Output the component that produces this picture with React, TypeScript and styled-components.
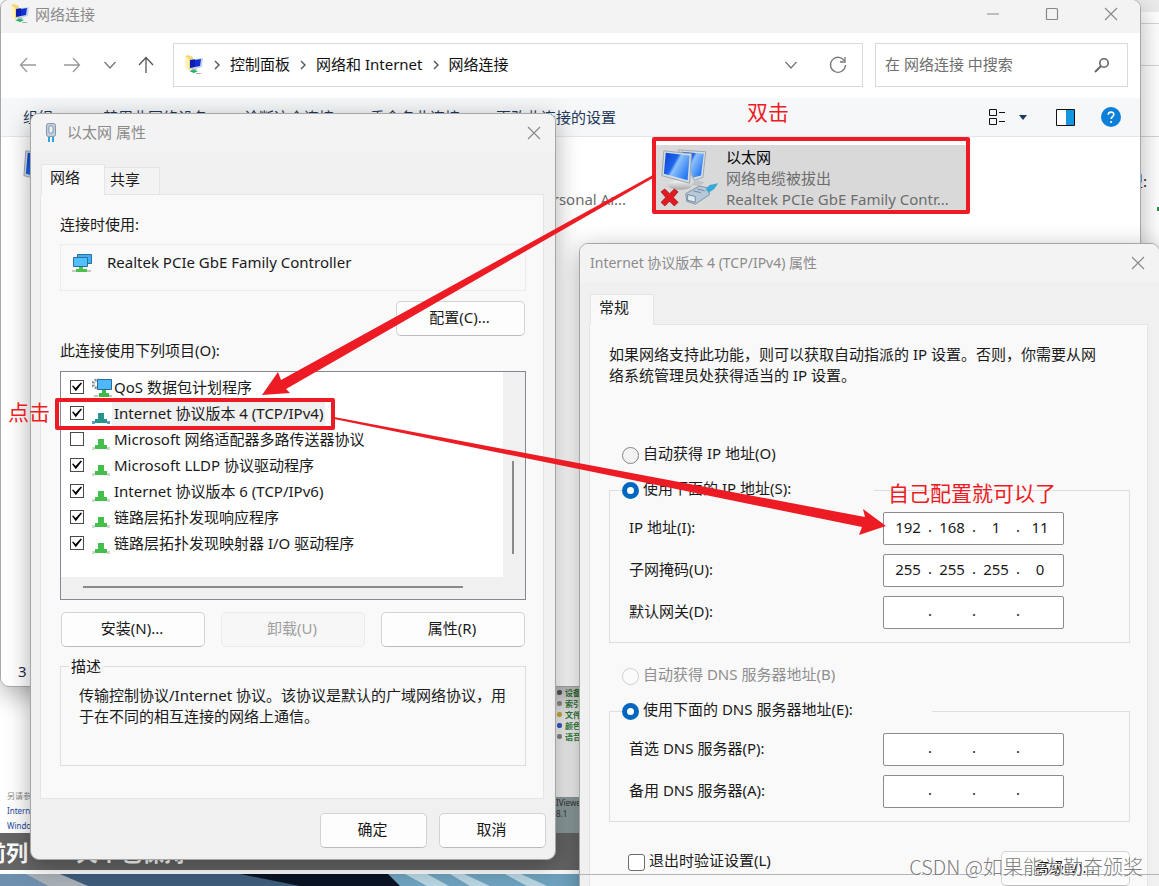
import React from "react";
import styled, { createGlobalStyle, css } from "styled-components";

const RED = "#ed1c24";

const Global = createGlobalStyle`
  * { box-sizing: border-box; }
  body {
    margin: 0;
    font-family: "Noto Sans", "Noto Sans CJK SC", sans-serif;
    font-size: 15px;
    line-height: 21px;
    color: #1a1a1a;
  }
  button, input { font: inherit; color: inherit; }
  p { margin: 0; }
`;

/* ---------- desktop behind the windows ---------- */

const Desktop = styled.main`
  position: relative;
  height: 100vh;
  overflow: hidden;
  display: flex;
  flex-direction: column;
  background: #fff;
`;

const BackPage = styled.div`
  position: relative;
  flex: none;
  height: 833px;
  background: #fff;
`;

const BackToolbar = styled.div`
  position: absolute;
  top: 0;
  right: 0;
  width: 31px;
  display: grid;
  grid-template-rows: 12px 12px 42px 71px 60px;
  white-space: nowrap;
  & > span { border-bottom: 1px solid #d4d4d4; }
  & > span:first-child { background: #ececec; border: 0; }
`;

const BackLabel = styled.p`
  padding: 34px 0 0;
  color: #222;
`;

const GreenMark = styled.i`
  position: absolute;
  right: 0;
  top: 207px;
  width: 2px;
  height: 4px;
  background: #2a8a4a;
`;

const SeeAlso = styled.div`
  position: absolute;
  left: 7px;
  bottom: 0;
  display: flex;
  flex-direction: column;
  font-size: 8px;
  line-height: 15px;
  color: #888;
`;

const BackLink = styled.a`
  color: #1c4a9c;
  text-decoration: none;
`;

const SideShot = styled.div`
  position: absolute;
  left: 540px;
  top: 686px;
  width: 60px;
  bottom: 0;
  display: flex;
  flex-direction: column;
  border-top: 1px solid #777;
  background: #f2f2f2;
  color: #2f7d3b;
  font-size: 8px;
  line-height: 11px;
`;

const SideRow = styled.div`
  display: flex;
  gap: 3px;
  padding-left: 17px;
  font-weight: 700;
  white-space: nowrap;
`;

const SideDot = styled.i<{ $c: string }>`
  width: 5px;
  height: 5px;
  margin-top: 3px;
  border-radius: 2px;
  background: ${(p) => p.$c};
`;

const SideFooter = styled.div`
  margin-top: auto;
  height: 36px;
  padding-left: 16px;
  background: #8d9c9e;
  color: #333;
`;

const Caption = styled.div`
  flex: none;
  height: 37px;
  display: flex;
  align-items: center;
  gap: 48px;
  background: #666;
  color: #fff;
  font-size: 22px;
  font-weight: 700;
  line-height: 36px;
  margin-bottom: 4px;
  white-space: nowrap;
  & > span:first-child { margin-left: -16px; }
`;

const Wallpaper = styled.svg`
  flex: 1;
  width: 100%;
  min-height: 0;
  background: #0a1424;
`;

/* ---------- shared window parts ---------- */

const Explorer = styled.section`
  position: absolute;
  left: 0;
  right: 18px;
  top: -1px;
  height: 688px;
  display: flex;
  flex-direction: column;
  overflow: hidden;
  border: 1px solid #a8a8a8;
  border-radius: 9px;
  background: #fff;
`;

const ExplorerShadow = styled.div`
  position: absolute;
  left: 0;
  right: 18px;
  top: -1px;
  height: 688px;
  border-radius: 9px;
  box-shadow: 0 8px 26px rgba(0, 0, 0, 0.3);
`;

const Dialog = styled.section<{ $left: number; $top: number; $width?: number }>`
  position: absolute;
  left: ${(p) => p.$left}px;
  top: ${(p) => p.$top}px;
  ${(p) => (p.$width ? `width: ${p.$width}px;` : "right: -1px;")}
  border: 1px solid #a6a6a6;
  border-radius: 9px;
  background: #f0f0f0;
  box-shadow: 0 6px 24px rgba(0, 0, 0, 0.32);
`;

const TitleBar = styled.header<{ $h: number; $pad: number; $lift?: number }>`
  flex: none;
  display: flex;
  align-items: center;
  height: ${(p) => p.$h}px;
  padding: 0 0 ${(p) => p.$lift ?? 0}px ${(p) => p.$pad}px;
  border-radius: 8px 8px 0 0;
  background: #f3f3f3;
  color: #8b8b8b;
`;

const Title = styled.h2<{ $gap?: number }>`
  flex: 1;
  margin: 0 0 0 ${(p) => p.$gap ?? 0}px;
  font-size: 15px;
  font-weight: 400;
  white-space: nowrap;
`;

const NarrowTitle = styled(Title)`
  font-size: 14px;
`;

const IconButton = styled.button<{ $w: number }>`
  flex: none;
  display: flex;
  align-items: center;
  justify-content: center;
  width: ${(p) => p.$w}px;
  height: 28px;
  padding: 0;
  border: 0;
  background: none;
`;

const Svg = styled.svg`
  display: block;
  flex: none;
`;

/* ---------- explorer ---------- */

const NavBar = styled.nav`
  flex: none;
  display: flex;
  align-items: center;
  height: 65px;
  padding: 0 12px 2px 5px;
`;

const AddressBox = styled.div`
  flex: 1;
  display: flex;
  align-items: center;
  height: 44px;
  margin: 0 12px 0 7px;
  padding-left: 10px;
  border: 1px solid #d9d9d9;
  color: #111;
`;

const Crumb = styled.a`
  color: inherit;
  text-decoration: none;
  white-space: nowrap;
`;

const CrumbSlot = styled.span`
  display: flex;
  justify-content: center;
  width: 26px;
`;

const Spacer = styled.span`
  flex: 1;
`;

const SearchBox = styled.label`
  display: flex;
  align-items: center;
  width: 253px;
  height: 44px;
  padding: 0 16px 0 9px;
  border: 1px solid #d9d9d9;
`;

const SearchInput = styled.input`
  flex: 1;
  min-width: 0;
  padding: 0;
  border: 0;
  outline: 0;
  background: none;
  &::placeholder { color: #6e6e6e; opacity: 1; }
`;

const CommandBar = styled.div`
  flex: none;
  display: flex;
  align-items: center;
  gap: 36px;
  height: 39px;
  padding: 0 12px 0 22px;
  border-bottom: 1px solid #e4e7ea;
  background: #f5f7f9;
  color: #1e395b;
`;

const Command = styled.button<{ $wide?: boolean }>`
  padding: 0;
  border: 0;
  margin-right: ${(p) => (p.$wide ? 14 : 0)}px;
  background: none;
  white-space: nowrap;
`;

const ViewTools = styled.div`
  display: flex;
  align-items: center;
  margin-left: auto;
`;

const Tiles = styled.div`
  flex: 1;
  display: flex;
  align-items: flex-start;
  gap: 9px;
  padding: 8px 0 0 17px;
`;

const Tile = styled.article<{ $on?: boolean }>`
  flex: none;
  display: flex;
  width: 310px;
  height: 65px;
  background: ${(p) => (p.$on ? "#d9d9d9" : "none")};
  color: #6d6d6d;
`;

const TileArt = styled.div`
  flex: none;
  width: 70px;
  padding: 3px 0 0 5px;
`;

const TileText = styled.div`
  display: flex;
  flex-direction: column;
  justify-content: flex-end;
  white-space: nowrap;
  & > strong { color: #000; font-weight: 400; }
`;

const Status = styled.footer`
  padding: 0 17px 4px;
  color: #1e2b4b;
`;

/* ---------- dialogs ---------- */

const TabRow = styled.div`
  display: flex;
  align-items: flex-end;
  height: 42px;
  padding: 0 10px;
`;

const Tab = styled.button<{ $on?: boolean; $w: number }>`
  width: ${(p) => p.$w}px;
  border: 1px solid #e5e5e5;
  border-bottom: 0;
  text-align: left;
  ${(p) =>
    p.$on
      ? css`
          position: relative;
          z-index: 1;
          height: 31px;
          padding: 0 0 5px 8px;
          margin-bottom: -1px;
          background: #f9f9f9;
        `
      : css`
          height: 27px;
          margin-left: -1px;
          padding: 0 0 3px 5px;
          background: #f3f3f3;
        `}
`;

const Panel = styled.div<{ $tall?: boolean }>`
  margin: 0 11px 0 9px;
  padding: 19px 17px 0 19px;
  height: ${(p) => (p.$tall ? "auto" : "605px")};
  border: 1px solid #e5e5e5;
  background: #f9f9f9;
`;

const Adapter = styled.div`
  display: flex;
  align-items: center;
  gap: 15px;
  height: 47px;
  margin: 9px 0 10px;
  padding: 0 0 10px 11px;
  border: 1px solid #ececec;
`;

const PushButton = styled.button<{ $w: number }>`
  width: ${(p) => p.$w}px;
  height: 35px;
  padding: 0 2px 2px 0;
  border: 1px solid #d3d3d3;
  border-bottom-color: #bcbcbc;
  border-radius: 5px;
  background: #fdfdfd;
  &:disabled {
    border-color: #ebebeb;
    background: #f7f7f7;
    color: #9f9f9f;
  }
`;

const ButtonRow = styled.div<{ $gap: number }>`
  display: flex;
  justify-content: flex-end;
  gap: ${(p) => p.$gap}px;
  padding-right: 1px;
`;

const Footer = styled(ButtonRow)`
  padding: 14px 9px 11px;
`;

const ListLabel = styled.p`
  padding: 4px 0 10px;
`;

const ListBox = styled.div`
  display: grid;
  grid-template-columns: 1fr 22px;
  grid-template-rows: 205px 22px;
  height: 229px;
  margin-bottom: 12px;
  border: 1px solid #828790;
  background: #f0f0f0;
`;

const Items = styled.ul`
  margin: 0;
  padding: 2px 0 0 9px;
  list-style: none;
  background: #fff;
`;

const Item = styled.li`
  height: 26px;
`;

const ItemLabel = styled.label`
  display: flex;
  align-items: center;
  height: 26px;
`;

const ItemName = styled.span<{ $on?: boolean }>`
  padding: 2px;
  background: ${(p) => (p.$on ? "#f0f0f0" : "none")};
  white-space: nowrap;
`;

const ItemIcon = styled.span`
  display: flex;
  align-items: flex-end;
  width: 20px;
  height: 21px;
  margin-left: 8px;
`;

const Tick = styled.input<{ $round?: boolean }>`
  appearance: none;
  flex: none;
  display: grid;
  place-items: center;
  width: ${(p) => (p.$round ? 17 : 14)}px;
  height: ${(p) => (p.$round ? 17 : 14)}px;
  margin: 0;
  border: ${(p) => (p.$round ? "1px solid #6b6b6b" : "1px solid #4a4a4a")};
  border-radius: ${(p) => (p.$round ? 3 : 0)}px;
  background: #fff;
  &:checked::before {
    content: "";
    width: 10px;
    height: 10px;
    background: #000;
    clip-path: polygon(0 40%, 12% 36%, 36% 60%, 88% 4%, 100% 12%, 38% 92%);
  }
`;

const VTrack = styled.div`
  display: flex;
  justify-content: center;
  padding-right: 3px;
  & > i { width: 2px; height: 93px; margin-top: 89px; background: #8a8a8a; }
`;

const HTrack = styled.div`
  padding: 9px 0 0 22px;
  & > i { display: block; width: 380px; max-width: 100%; height: 2px; background: #8a8a8a; }
`;

const Group = styled.fieldset<{ $h: number }>`
  min-width: 0;
  height: ${(p) => p.$h}px;
  margin: 0;
  padding: 0 18px;
  border: 1px solid #dedede;
`;

const Description = styled.fieldset`
  min-width: 0;
  height: 110px;
  margin: 9px 0 0;
  padding: 8px 14px 0 18px;
  border: 1px solid #dedede;
`;

const Legend = styled.legend`
  padding: 0 2px;
  margin-left: -10px;
`;

const RadioLegend = styled.legend<{ $w: number }>`
  width: ${(p) => p.$w}px;
  margin-left: -6px;
  padding: 0;
`;

const Choice = styled.label<{ $off?: boolean }>`
  display: flex;
  align-items: center;
  gap: 4px;
  height: 22px;
  color: ${(p) => (p.$off ? "#8f8f8f" : "inherit")};
  white-space: nowrap;
  & > span { padding-bottom: 3px; }
`;

const LooseChoice = styled(Choice)<{ $above: number }>`
  margin: ${(p) => p.$above}px 0 13px 13px;
`;

const Radio = styled.input`
  appearance: none;
  flex: none;
  width: 17px;
  height: 17px;
  margin: 0;
  border: 1px solid #858585;
  border-radius: 50%;
  background: #f3f3f3;
  &:checked { border: 5px solid #0067c0; background: #fff; }
  &:disabled { border-color: #cfcfcf; background: #fbfbfb; }
`;

const Fields = styled.div`
  display: grid;
  grid-template-columns: 1fr 181px;
  grid-auto-rows: 33px;
  row-gap: 9px;
  align-items: center;
  padding: 11px 47px 0 1px;
`;

const FieldLabel = styled.span`
  padding-bottom: 2px;
`;

const IpBox = styled.div`
  display: flex;
  align-items: center;
  height: 33px;
  padding: 0 4px 4px;
  border: 1px solid #8c8c8c;
  border-radius: 2px;
  background: #fff;
`;

const IpPart = styled.input`
  width: 40px;
  height: 25px;
  padding: 0;
  border: 0;
  outline: 0;
  background: none;
  text-align: center;
`;

const IpDot = styled.span`
  width: 4px;
  text-align: center;
`;

const IntroText = styled.p`
  padding-right: 28px;
`;

const PanelEnd = styled.div`
  display: flex;
  align-items: flex-start;
  justify-content: space-between;
  padding: 29px 0 30px 19px;
`;

/* ---------- annotations over everything ---------- */

const Overlay = styled.svg`
  position: absolute;
  left: 0;
  top: 0;
  width: 1159px;
  height: 886px;
  pointer-events: none;
`;

const Note = styled.p<{ $x: number; $y: number }>`
  position: absolute;
  left: ${(p) => p.$x}px;
  top: ${(p) => p.$y}px;
  color: ${RED};
  font-size: 21px;
  line-height: 28px;
  white-space: nowrap;
`;

const ScanLine = styled.div`
  position: absolute;
  left: 579px;
  right: 0;
  top: 874px;
  height: 1px;
  background: #b4b4b4;
`;

const Watermark = styled.p`
  position: absolute;
  right: 16px;
  bottom: 4px;
  color: rgba(110, 110, 110, 0.9);
  font-family: "Noto Sans CJK SC", sans-serif;
  font-size: 20px;
  font-weight: 300;
  line-height: 30px;
  text-shadow: 1px 1px 0 #fff;
  white-space: nowrap;
`;

/* ---------- icons ---------- */

const FolderNetIcon = () => (
  <Svg width="20" height="20" viewBox="0 0 20 20">
    <path d="M1 1l3-1 5 2v11l-4 2-4-3z" fill="#f3d777" />
    <path d="M1 1l4 3v11l-4-3z" fill="#fdf2bd" />
    <path d="M6 5l6-1v8l-6 1z" fill="#0b1fb4" />
    <path d="M11 4l8-1-1 9-7 2z" fill="#c3d4ea" />
    <path d="M11 5l6-1-1 7-5 1z" fill="#1230d0" />
    <path d="M8 13l5 1-1 1-5 1z" fill="#a9b6c8" />
    <path d="M5 16l5-1 4 1-4 2z" fill="#18b457" />
    <path d="M12 18h4l2 1h-6z" fill="#9bb5aa" />
  </Svg>
);

const Chevron = ({ down }: { down?: boolean }) =>
  down ? (
    <Svg width="14" height="14" viewBox="0 0 14 14">
      <path d="M1.500 4l5.500 6 5.500-6" fill="none" stroke="#777" strokeWidth="1.300" />
    </Svg>
  ) : (
    <Svg width="8" height="10" viewBox="0 0 8 10">
      <path d="M2 1l4 4-4 4" fill="none" stroke="#555" strokeWidth="1.400" />
    </Svg>
  );

const Arrow = ({ d, color }: { d: string; color: string }) => (
  <Svg width="18" height="18" viewBox="0 0 18 18">
    <path d={d} fill="none" stroke={color} strokeWidth="1.300" />
  </Svg>
);

const CloseIcon = () => (
  <Svg width="14" height="14" viewBox="0 0 14 14">
    <path d="M1 1l12 12M13 1L1 13" stroke="#888" strokeWidth="1.100" />
  </Svg>
);

const PlugIcon = () => (
  <Svg width="12" height="20" viewBox="0 0 12 20">
    <rect x="1.500" y=".5" width="9" height="13" rx="2" fill="#c3cede" stroke="#8793a8" />
    <rect x="4" y="3" width="4" height="7" rx="1" fill="#eef3fa" stroke="#76839b" strokeWidth=".8" />
    <path d="M3 14h2v5H3zM7 14h2v5H7z" fill="#2ba7dc" />
  </Svg>
);

const ScreensIcon = () => (
  <Svg width="20" height="20" viewBox="0 0 20 20">
    <path d="M5.500 1.500h14v9h-14z" fill="#3fb0f5" stroke="#2c6f9c" />
    <path d="M1.500 4.500h14v9h-14z" fill="#52c0ff" stroke="#2c6f9c" />
    <path d="M7 14h4v2h4v3H4v-3h3z" fill="#4cc04c" />
    <path d="M0 17h4v2H0zM15 17h4v2h-4z" fill="#c4c9c4" />
  </Svg>
);

const QosIcon = () => (
  <Svg width="20" height="20" viewBox="0 0 20 20">
    <circle cx="5" cy="6" r="4" fill="none" stroke="#8a949c" strokeWidth="3" strokeDasharray="2 1.200" />
    <path d="M5.500 1.500h14v10h-14z" fill="#4db8fb" stroke="#2b6d98" />
    <path d="M10 12h4v3h3v4H7v-4h3z" fill="#3fb84a" />
    <path d="M2 17h4v2H2zM17 17h3v2h-3z" fill="#b9c6bb" />
  </Svg>
);

const ProtocolIcon = ({ on }: { on?: boolean }) => (
  <Svg width="18" height="11" viewBox="0 0 18 11">
    <path d="M0 8h3v3H0zM15 8h3v3h-3z" fill={on ? "#5f9bd0" : "#cfd8cf"} />
    <path d="M6 0h6v6h3v4H3V6h3z" fill={on ? "#26958e" : "#45bf4c"} />
  </Svg>
);

const MonitorsIcon = ({ broken }: { broken?: boolean }) => (
  <Svg width="59" height="59" viewBox="0 0 62 62">
    <defs>
      <linearGradient id="screen" x1="0" y1="0" x2="1" y2=".6">
        <stop offset="0" stopColor="#0a3fd0" />
        <stop offset=".45" stopColor="#1f66ec" />
        <stop offset=".55" stopColor="#8cc2fc" />
        <stop offset="1" stopColor="#2c7bf2" />
      </linearGradient>
      <linearGradient id="stand" x1="0" y1="0" x2="0" y2="1">
        <stop offset="0" stopColor="#f5f5f5" />
        <stop offset="1" stopColor="#a9a9a9" />
      </linearGradient>
    </defs>
    <path d="M18 2l29 2-3 27-9 3z" fill="#d6dde4" stroke="#9ba6b0" />
    <path d="M21 4l24 2-3 23-8 2z" fill="url(#screen)" />
    <path d="M36 34l10 2-6 4-8-1z" fill="#bfc4c8" />
    <path d="M16 32l12 3v6H16z" fill="#c4c8cb" />
    <ellipse cx="20" cy="39" rx="13" ry="5" fill="url(#stand)" />
    <path d="M3 3l29 3-2 31-29-8z" fill="#d6dde4" stroke="#98a4b0" />
    <path d="M5 5l25 3-2 26-25-7z" fill="url(#screen)" />
    {broken && (
      <>
        <path d="M26 48l14-8 10 2 1 7-15 10-9-3z" fill="#b7c9d8" stroke="#7e93a6" />
        <path d="M28 49l8 2v6l-8-2zM38 43l8 2M34 45l8 2" fill="#e1ebf2" stroke="#71879b" />
        <path d="M47 43l4-4 9-2-4 6-6 4z" fill="#37a9d8" />
        <path d="M4 43l5 5 5-5 4 3-5 6 5 5-4 4-5-5-5 5-4-4 5-5-5-6z" fill="#e01b22" stroke="#9c0f14" strokeWidth=".7" />
      </>
    )}
  </Svg>
);

/* ---------- content ---------- */

const items = [
  { name: "QoS 数据包计划程序", checked: true, qos: true },
  { name: "Internet 协议版本 4 (TCP/IPv4)", checked: true, selected: true },
  { name: "Microsoft 网络适配器多路传送器协议", checked: false },
  { name: "Microsoft LLDP 协议驱动程序", checked: true },
  { name: "Internet 协议版本 6 (TCP/IPv6)", checked: true },
  { name: "链路层拓扑发现响应程序", checked: true },
  { name: "链路层拓扑发现映射器 I/O 驱动程序", checked: true },
];

const sideRows = [
  ["设备和", "#666"],
  ["索引选", "#999"],
  ["文件历", "#c9b23a"],
  ["颜色管", "#3557c4"],
  ["语音识", "#888"],
];

const IpField = ({ label, parts = ["", "", "", ""] }: { label: string; parts?: string[] }) => (
  <>
    <FieldLabel>{label}</FieldLabel>
    <IpBox role="group" aria-label={label}>
      {parts.map((v, i) => (
        <React.Fragment key={i}>
          {i > 0 && <IpDot>.</IpDot>}
          <IpPart defaultValue={v} aria-label={`${label} ${i + 1}`} />
        </React.Fragment>
      ))}
    </IpBox>
  </>
);

const ExplorerWindow = () => (
  <Explorer>
    <TitleBar $h={33} $pad={9} $lift={5}>
      <FolderNetIcon />
      <Title $gap={5}>网络连接</Title>
      <IconButton $w={59} aria-label="最小化">
        <Svg width="14" height="14" viewBox="0 0 14 14"><path d="M1 7h12" stroke="#888" /></Svg>
      </IconButton>
      <IconButton $w={59} aria-label="最大化">
        <Svg width="14" height="14" viewBox="0 0 14 14">
          <rect x="1.500" y="1.500" width="11" height="11" rx="1" fill="none" stroke="#888" strokeWidth="1.200" />
        </Svg>
      </IconButton>
      <IconButton $w={59} aria-label="关闭"><CloseIcon /></IconButton>
    </TitleBar>
    <NavBar>
      <IconButton $w={44} aria-label="后退"><Arrow color="#999" d="M17 9H2M8 2L1.500 9 8 16" /></IconButton>
      <IconButton $w={44} aria-label="前进"><Arrow color="#999" d="M1 9h15M10 2l6.500 7-6.500 7" /></IconButton>
      <IconButton $w={32} aria-label="最近"><Chevron down /></IconButton>
      <IconButton $w={40} aria-label="向上"><Arrow color="#555" d="M9 17V2M2 9l7-7.500L16 9" /></IconButton>
      <AddressBox>
        <FolderNetIcon />
        <CrumbSlot><Chevron /></CrumbSlot>
        <Crumb href="#">控制面板</Crumb>
        <CrumbSlot><Chevron /></CrumbSlot>
        <Crumb href="#">网络和 Internet</Crumb>
        <CrumbSlot><Chevron /></CrumbSlot>
        <Crumb href="#">网络连接</Crumb>
        <Spacer />
        <IconButton $w={46} aria-label="展开"><Chevron down /></IconButton>
        <IconButton $w={48} aria-label="刷新">
          <Svg width="18" height="18" viewBox="0 0 18 18">
            <path d="M15.500 5A7.500 7.500 0 1 0 16.500 9" fill="none" stroke="#777" strokeWidth="1.300" />
            <path d="M16 1v5h-5" fill="none" stroke="#777" strokeWidth="1.300" />
          </Svg>
        </IconButton>
      </AddressBox>
      <SearchBox>
        <SearchInput placeholder="在 网络连接 中搜索" aria-label="搜索" />
        <Svg width="18" height="18" viewBox="0 0 18 18">
          <circle cx="11" cy="7" r="4.200" fill="none" stroke="#666" strokeWidth="1.600" />
          <path d="M8 10l-6 6" stroke="#666" strokeWidth="2" />
        </Svg>
      </SearchBox>
    </NavBar>
    <CommandBar>
      <Command $wide>组织</Command>
      <Command>禁用此网络设备</Command>
      <Command>诊断这个连接</Command>
      <Command>重命名此连接</Command>
      <Command>更改此连接的设置</Command>
      <ViewTools>
        <IconButton $w={26} aria-label="视图">
          <Svg width="18" height="18" viewBox="0 0 18 18">
            <path d="M1.500 1.500h7v6h-7zM1.500 10.500h7v6h-7zM11 4.500h6M11 13.500h6" fill="none" stroke="#111" />
          </Svg>
        </IconButton>
        <IconButton $w={26} aria-label="更多选项">
          <Svg width="8" height="5" viewBox="0 0 8 5"><path d="M0 0h8L4 5z" fill="#1e395b" /></Svg>
        </IconButton>
        <IconButton $w={58} aria-label="预览窗格">
          <Svg width="19" height="17" viewBox="0 0 19 17">
            <path d="M.5.500h18v16H.5z" fill="#fff" stroke="#111" />
            <path d="M10 1h8v15h-8z" fill="#1296e0" />
          </Svg>
        </IconButton>
        <IconButton $w={34} aria-label="帮助">
          <Svg width="20" height="20" viewBox="0 0 20 20">
            <circle cx="10" cy="10" r="10" fill="#0c80d8" />
            <path d="M7.200 7.800C7.200 4.200 13 4.300 12.800 7.600c0 2-2.700 2.200-2.700 4.400" fill="none" stroke="#fff" strokeWidth="1.600" />
            <circle cx="10.100" cy="15" r="1.100" fill="#fff" />
          </Svg>
        </IconButton>
      </ViewTools>
    </CommandBar>
    <Tiles>
      <Tile><TileArt><MonitorsIcon /></TileArt></Tile>
      <Tile>
        <TileArt />
        <TileText><span>Bluetooth Device (Personal Ar...</span></TileText>
      </Tile>
      <Tile $on>
        <TileArt><MonitorsIcon broken /></TileArt>
        <TileText>
          <strong>以太网</strong>
          <span>网络电缆被拔出</span>
          <span>Realtek PCIe GbE Family Contr...</span>
        </TileText>
      </Tile>
    </Tiles>
    <Status>3</Status>
  </Explorer>
);

const EthernetDialog = () => (
  <Dialog $left={30} $top={113} $width={526}>
    <TitleBar $h={38} $pad={14} $lift={1}>
      <PlugIcon />
      <Title $gap={10}>以太网 属性</Title>
      <IconButton $w={42} aria-label="关闭"><CloseIcon /></IconButton>
    </TitleBar>
    <TabRow>
      <Tab $on $w={64}>网络</Tab>
      <Tab $w={56}>共享</Tab>
    </TabRow>
    <Panel>
      <p>连接时使用:</p>
      <Adapter><ScreensIcon />Realtek PCIe GbE Family Controller</Adapter>
      <ButtonRow $gap={16}><PushButton $w={129}>配置(C)...</PushButton></ButtonRow>
      <ListLabel>此连接使用下列项目(O):</ListLabel>
      <ListBox>
        <Items>
          {items.map((it) => (
            <Item key={it.name}>
              <ItemLabel>
                <Tick type="checkbox" defaultChecked={it.checked} />
                <ItemIcon>{it.qos ? <QosIcon /> : <ProtocolIcon on={it.selected} />}</ItemIcon>
                <ItemName $on={it.selected}>{it.name}</ItemName>
              </ItemLabel>
            </Item>
          ))}
        </Items>
        <VTrack><i /></VTrack>
        <HTrack><i /></HTrack>
      </ListBox>
      <ButtonRow $gap={16}>
        <PushButton $w={144}>安装(N)...</PushButton>
        <PushButton $w={144} disabled>卸载(U)</PushButton>
        <PushButton $w={144}>属性(R)</PushButton>
      </ButtonRow>
      <Description>
        <Legend>描述</Legend>
        <p>传输控制协议/Internet 协议。该协议是默认的广域网络协议，用于在不同的相互连接的网络上通信。</p>
      </Description>
    </Panel>
    <Footer $gap={12}>
      <PushButton $w={107}>确定</PushButton>
      <PushButton $w={107}>取消</PushButton>
    </Footer>
  </Dialog>
);

const Ipv4Dialog = () => (
  <Dialog $left={579} $top={243}>
    <TitleBar $h={38} $pad={10} $lift={1}>
      <NarrowTitle>Internet 协议版本 4 (TCP/IPv4) 属性</NarrowTitle>
      <IconButton $w={42} aria-label="关闭"><CloseIcon /></IconButton>
    </TitleBar>
    <TabRow><Tab $on $w={64}>常规</Tab></TabRow>
    <Panel $tall>
      <IntroText>如果网络支持此功能，则可以获取自动指派的 IP 设置。否则，你需要从网络系统管理员处获得适当的 IP 设置。</IntroText>
      <LooseChoice $above={58}>
        <Radio type="radio" name="ip" /><span>自动获得 IP 地址(O)</span>
      </LooseChoice>
      <Group $h={164}>
        <RadioLegend $w={252}>
          <Choice><Radio type="radio" name="ip" defaultChecked /><span>使用下面的 IP 地址(S):</span></Choice>
        </RadioLegend>
        <Fields>
          <IpField label="IP 地址(I):" parts={["192", "168", "1", "11"]} />
          <IpField label="子网掩码(U):" parts={["255", "255", "255", "0"]} />
          <IpField label="默认网关(D):" />
        </Fields>
      </Group>
      <LooseChoice $above={22} $off>
        <Radio type="radio" name="dns" disabled /><span>自动获得 DNS 服务器地址(B)</span>
      </LooseChoice>
      <Group $h={122}>
        <RadioLegend $w={310}>
          <Choice><Radio type="radio" name="dns" defaultChecked /><span>使用下面的 DNS 服务器地址(E):</span></Choice>
        </RadioLegend>
        <Fields>
          <IpField label="首选 DNS 服务器(P):" />
          <IpField label="备用 DNS 服务器(A):" />
        </Fields>
      </Group>
      <PanelEnd>
        <Choice><Tick type="checkbox" $round /><span>退出时验证设置(L)</span></Choice>
        <PushButton $w={129}>高级(V)...</PushButton>
      </PanelEnd>
    </Panel>
  </Dialog>
);

export default function App() {
  return (
    <Desktop>
      <Global />
      <BackPage>
        <BackToolbar>
          <span /><span /><span /><span />
          <BackLabel>型:</BackLabel>
        </BackToolbar>
        <GreenMark />
        <SeeAlso>
          <span>另请参阅</span>
          <BackLink href="#">Internet</BackLink>
          <BackLink href="#">Windows</BackLink>
        </SeeAlso>
        <SideShot>
          {sideRows.map(([t, c]) => (
            <SideRow key={t}><SideDot $c={c} />{t}</SideRow>
          ))}
          <SideFooter>IViewer<br />8.1</SideFooter>
        </SideShot>
      </BackPage>
      <Caption><span>前列</span><span>火个也保持</span></Caption>
      <Wallpaper viewBox="0 0 1159 12" preserveAspectRatio="none">
        <path d="M0 0h240l60 12H0z" fill="#3f5d7c" />
        <path d="M0 0h28l20 12H0z" fill="#6e8fae" />
        <path d="M26 0h34l28 12H48z" fill="#a9b0b8" />
        <path d="M388 0h200v12H400z" fill="#6fa3bf" />
        <path d="M405 0h22l22 12h-22zM450 0h14l26 12h-20zM505 0h16l26 12h-20z" fill="#b9d6e2" />
      </Wallpaper>
      <ExplorerShadow />
      <ExplorerWindow />
      <EthernetDialog />
      <Ipv4Dialog />
      <ScanLine />
      <Overlay viewBox="0 0 1159 886">
        <g fill="none" stroke={RED} strokeWidth="4" strokeLinejoin="round">
          <rect x="654" y="139" width="314" height="73" />
          <rect x="57" y="400" width="276" height="28" />
        </g>
        <path d="M653 175L281 380 278 372 262 395 290 393 286 389 653 178z" fill={RED} />
        <path d="M334 417L865 517 863 509 886 526 859 535 862 527 334 419z" fill={RED} />
      </Overlay>
      <Note $x={747} $y={98}>双击</Note>
      <Note $x={8} $y={398}>点击</Note>
      <Note $x={888} $y={479}>自己配置就可以了</Note>
      <Watermark>CSDN @如果能为勤奋颁奖</Watermark>
    </Desktop>
  );
}
